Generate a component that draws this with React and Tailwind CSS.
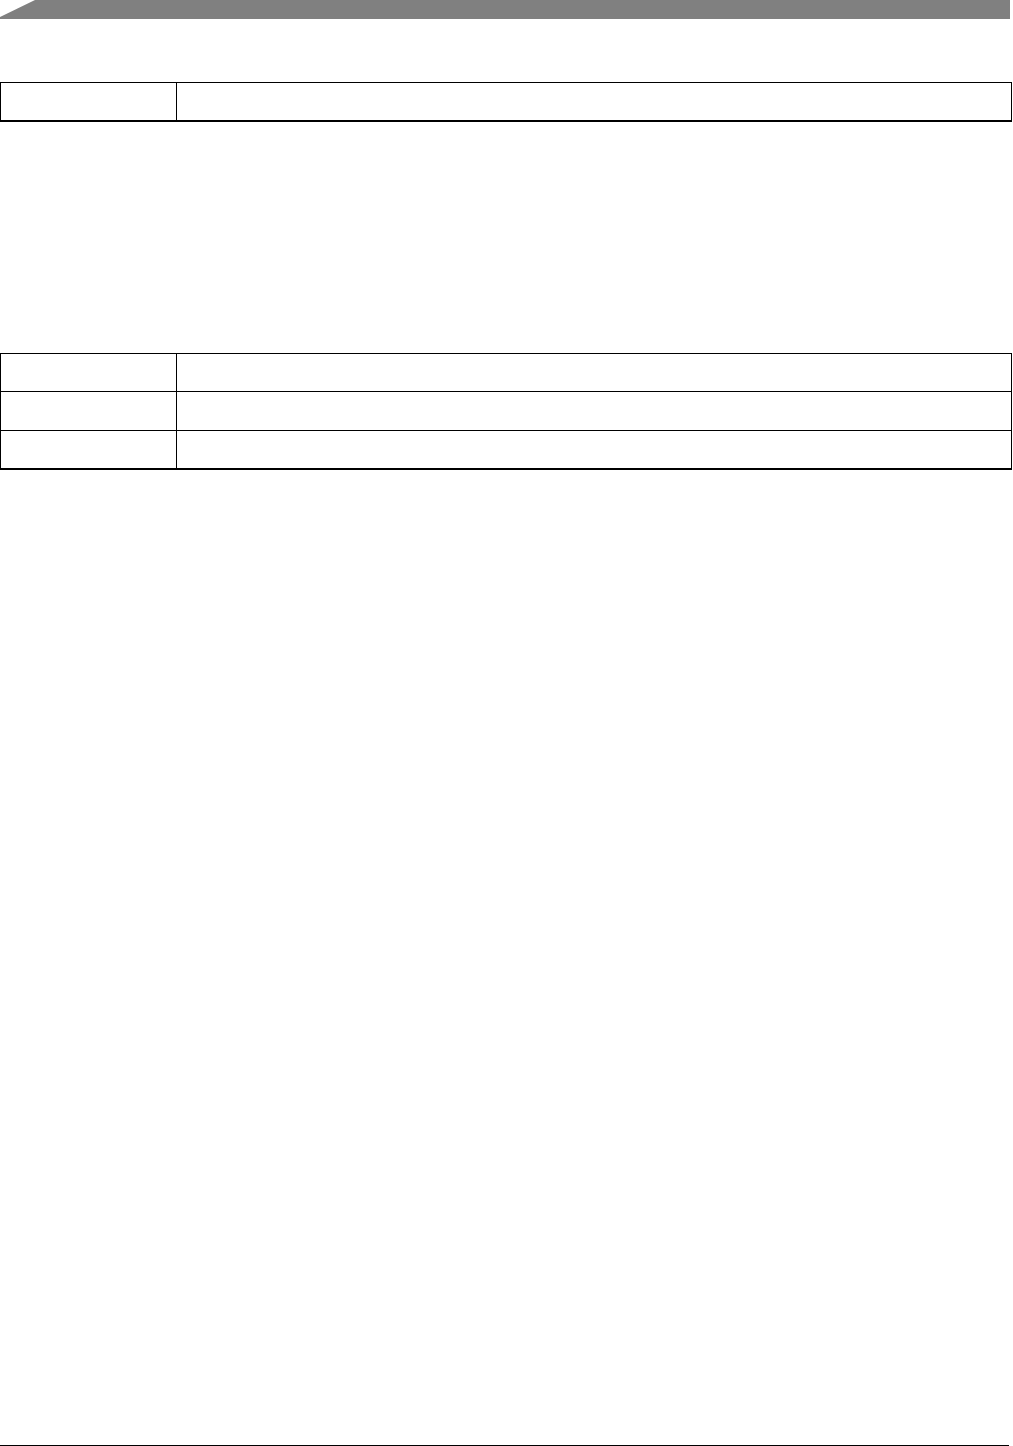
export default function App() {
  const rows = ["h-[38px]", "h-[39px]", "h-[38px]"];
  return (
    <div className="flex flex-col w-[1013px] h-[1446px] bg-white font-['Liberation_Sans',sans-serif]">
      {/* header band */}
      <div className="h-[19px] w-[1010px] bg-[#808080] [clip-path:polygon(35px_0,100%_0,100%_100%,0_100%,0_17px)]"></div>

      {/* table 1 */}
      <div className="mt-[63px] w-[1012px] border-t border-l border-r border-b-2 border-black">
        <div className="grid grid-cols-[176px_1fr] h-[37px]">
          <div className="border-r border-black"></div>
          <div></div>
        </div>
      </div>

      {/* table 2 */}
      <div className="mt-[231px] w-[1012px] border-l border-r border-b-2 border-black">
        {rows.map((h, i) => (
          <div
            key={i}
            className={`grid grid-cols-[176px_1fr] ${h} border-t border-black`}
          >
            <div className="border-r border-black"></div>
            <div></div>
          </div>
        ))}
      </div>

      {/* footer rule */}
      <div className="mt-auto w-[1009px] h-px bg-black"></div>
    </div>
  );
}
